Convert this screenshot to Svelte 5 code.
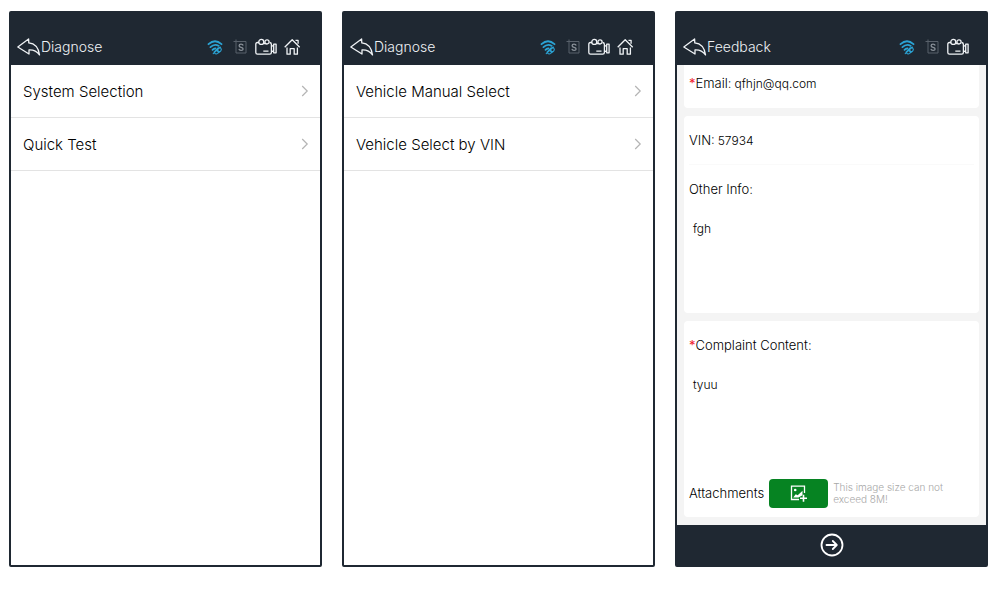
<script>
  const menus = [
    { title: 'Diagnose', items: ['System Selection', 'Quick Test'] },
    { title: 'Diagnose', items: ['Vehicle Manual Select', 'Vehicle Select by VIN'] },
  ];

  let email = $state('qfhjn@qq.com');
  let vin = $state('57934');
  let other = $state('fgh');
  let complaint = $state('tyuu');
</script>

{#snippet header(title, home)}
  <header>
    <button class="back" type="button">
      <svg width="24" height="20" viewBox="0 0 24 20" aria-hidden="true">
        <path d="M.8 10 11.600 2l.2 3.900c5.800.5 9.600 4.200 10.700 12-2.800-4-6.200-5.200-10.500-5v4.100z" />
      </svg>
      <span>{title}</span>
    </button>
    <div class="tools">
      <button class="tool wifi" type="button" aria-label="Connection">
        <svg width="18" height="18" viewBox="0 0 18 18" aria-hidden="true">
          <path d="M1.500 6.200Q8 .2 14.500 6.200" />
          <path d="M3.400 9.100Q7.500 5.300 11.800 7.900" />
          <path d="M5.500 11.900q1.400-1.600 3-1.400" />
          <path class="fine" d="m7 14.200 2.200-2.300 2.500 2.500-1 1q-1.700 1.200-3.100-.2zM9.700 11.300l1.300-1.400q1.700-1 2.800.2t0 2.800l-1.300 1.300zM6.200 15.600l7.200-6.600" />
        </svg>
      </button>
      <button class="tool shot" type="button" aria-label="Screenshot">
        <svg width="16" height="18" viewBox="0 0 16 18" aria-hidden="true">
          <path d="M1.500 3.500h12.500v11.500H4V1.500" />
          <path class="letter" d="M11.200 7.500Q10.800 6.200 9 6.200 7.100 6.200 7.100 7.700q0 1.200 2 1.600t2 1.600q0 1.500-2 1.500-1.900 0-2.200-1.500" />
        </svg>
      </button>
      <button class="tool" type="button" aria-label="Record video">
        <svg width="22" height="18" viewBox="0 0 22 18" aria-hidden="true">
          <path d="M4 4.500H2.500Q.8 4.500.8 6.200v8.200q0 1.700 1.700 1.700h12.200q1.700 0 1.700-1.700V6.500q0-1.700-1.700-2" />
          <circle cx="6.300" cy="3.900" r="2.500" />
          <circle cx="12" cy="3.900" r="2.100" />
          <path d="M8.300 5.500h2.200M8.300 13.200h5.200M16.400 8.200l2.300-.6v6l-2.300-.6M18.700 6.200h2.400v8.600h-2.400z" />
        </svg>
      </button>
      {#if home}
        <button class="tool" type="button" aria-label="Home">
          <svg width="19" height="18" viewBox="0 0 19 18" aria-hidden="true">
            <path d="m.7 9.200 7.500-7.500 7.500 7.500M11.500 2.300h2.600v3.500M3 9.500v6.700h3.200v-5.500h4v5.500h3.200V9.500" />
          </svg>
        </button>
      {/if}
    </div>
  </header>
{/snippet}

<main>
  {#each menus as menu}
    <section class="phone">
      {@render header(menu.title, true)}
      <nav>
        {#each menu.items as item}
          <a href="#top">
            <span>{item}</span>
            <svg width="8" height="12" viewBox="0 0 8 12" aria-hidden="true"><path d="m1.200 1 5 5-5 5" /></svg>
          </a>
        {/each}
      </nav>
    </section>
  {/each}

  <section class="phone">
    {@render header('Feedback', false)}
    <form>
      <div class="card first">
        <div class="line">
          <label for="email"><b>*</b>Email:</label>
          <input id="email" bind:value={email} />
        </div>
      </div>
      <div class="card">
        <div class="line tall">
          <label for="vin">VIN:</label>
          <input id="vin" bind:value={vin} />
        </div>
        <label class="heading" for="other">Other Info:</label>
        <textarea id="other" bind:value={other}></textarea>
      </div>
      <div class="card last">
        <label class="heading" for="complaint"><b>*</b>Complaint Content:</label>
        <textarea id="complaint" bind:value={complaint}></textarea>
        <div class="attach">
          <span>Attachments</span>
          <button class="add" type="button" aria-label="Add image">
            <svg width="19" height="19" viewBox="0 0 19 19" aria-hidden="true">
              <path class="edge" d="M15.500 9V2.200h-13v13.300H10" />
              <circle cx="6.200" cy="6" r="1.300" />
              <path d="m4.200 13.500 2.500-3.200 2 1 4.800-4.600v4.600l-4 2.200z" />
              <path class="plus" d="M14.500 10.800v7M11 14.300h7" />
            </svg>
          </button>
          <small>This image size can not exceed 8M!</small>
        </div>
      </div>
    </form>
    <footer>
      <button type="button" aria-label="Submit">
        <svg width="24" height="24" viewBox="0 0 24 24" aria-hidden="true">
          <circle cx="12" cy="12" r="10.500" />
          <path d="M6.500 12h10M12.800 8l4 4-4 4" />
        </svg>
      </button>
    </footer>
  </section>
</main>

<style>
  :global(body) {
    margin: 0;
    background: #fff;
  }

  main {
    box-sizing: border-box;
    min-height: 100vh;
    padding: 11px 12px 29px 9px;
    display: grid;
    grid-template-columns: repeat(3, minmax(0, 1fr));
    gap: 20px;
    font-family: Inter, 'Liberation Sans', sans-serif;
    font-size: 13px;
    font-weight: 300;
    color: #000;
  }

  button,
  input,
  textarea {
    font: inherit;
    color: inherit;
    background: none;
    border: 0;
    padding: 0;
    margin: 0;
    outline: 0;
  }

  button {
    display: flex;
    align-items: center;
    cursor: pointer;
  }

  svg {
    display: block;
    flex: none;
    fill: none;
    stroke: currentColor;
  }

  .phone {
    display: flex;
    flex-direction: column;
    border: 2px solid #1f2832;
    border-radius: 2px;
    background: #fff;
  }

  header {
    display: flex;
    justify-content: space-between;
    align-items: center;
    padding: 18px 17px 2px 6px;
    height: 32px;
    background: #1f2832;
    color: #f0f3f6;
  }

  .back {
    font-size: 14px;
    line-height: 20px;
  }

  .back svg {
    stroke-width: 1.3;
    stroke-linejoin: round;
  }

  .tools {
    display: flex;
    gap: 7px;
  }

  .tool svg {
    stroke-width: 1.3;
    stroke-linejoin: round;
  }

  .wifi {
    color: #2ba3d4;
  }

  .wifi svg {
    stroke-width: 1.8;
    stroke-linecap: round;
  }

  .wifi .fine {
    stroke-width: 1.1;
  }

  .shot {
    color: #59616b;
  }

  .shot svg {
    stroke-width: 1;
  }

  .shot .letter {
    stroke: #8a9199;
    stroke-width: 1.3;
  }

  nav a {
    display: flex;
    justify-content: space-between;
    align-items: center;
    height: 52px;
    padding: 0 11px 0 12px;
    border-bottom: 1px solid #e3e3e3;
    color: #000;
    font-size: 15px;
    text-decoration: none;
  }

  nav svg {
    stroke: #b4b4b4;
    stroke-width: 1.2;
  }

  form {
    flex: 1;
    display: flex;
    flex-direction: column;
    gap: 8px;
    padding: 0 7px 8px;
    background: #f4f4f4;
  }

  .card {
    display: flex;
    flex-direction: column;
    padding: 0 5px;
    border-radius: 4px;
    background: #fff;
  }

  .first {
    padding: 6px 5px 13px;
    border-radius: 0 0 4px 4px;
  }

  .last {
    flex: 1;
  }

  .line {
    display: flex;
    align-items: center;
    gap: 3px;
    height: 24px;
  }

  .tall {
    height: 48px;
    border-bottom: 1px solid #fafafa;
  }

  .line input {
    flex: 1;
    min-width: 0;
    font-size: 12px;
  }

  .heading {
    line-height: 48px;
  }

  b {
    color: #f0202c;
    font-weight: 400;
  }

  textarea {
    box-sizing: border-box;
    height: 100px;
    padding: 7px 4px;
    font-size: 12px;
    line-height: 18px;
    resize: none;
  }

  .attach {
    display: flex;
    align-items: center;
    gap: 5px;
    margin-top: auto;
    height: 48px;
  }

  .add {
    justify-content: center;
    width: 59px;
    height: 29px;
    flex: none;
    border-radius: 4px;
    background: #068322;
    color: #fff;
  }

  .add svg {
    fill: currentColor;
    stroke: none;
  }

  .add .edge,
  .add .plus {
    fill: none;
    stroke: currentColor;
    stroke-width: 1.3;
  }

  .add .plus {
    stroke-width: 1.6;
  }

  small {
    max-width: 120px;
    font-size: 10px;
    line-height: 12px;
    color: #a8a8a8;
  }

  footer {
    display: flex;
    justify-content: center;
    align-items: center;
    height: 40px;
    background: #1f2832;
    color: #fff;
  }

  footer svg {
    stroke-width: 1.8;
    stroke-linecap: round;
    stroke-linejoin: round;
  }
</style>
